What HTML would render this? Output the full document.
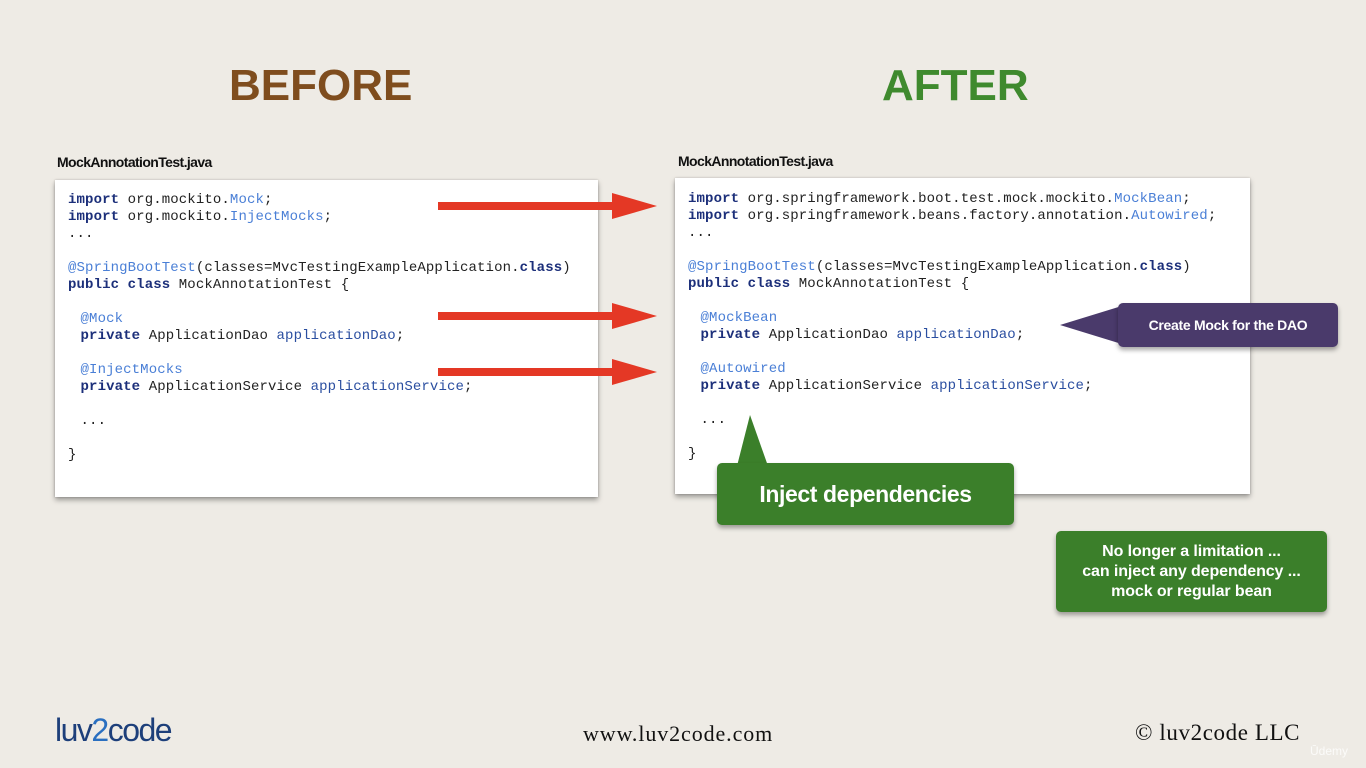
<!DOCTYPE html>
<html><head><meta charset="utf-8"><style>
*{margin:0;padding:0;box-sizing:border-box}
body{width:1366px;height:768px;overflow:hidden;background:#eeebe5;position:relative;font-family:"Liberation Sans",sans-serif}
.abs{position:absolute}
.title{font-weight:bold;font-size:44px;top:60px;line-height:52px}
.fname{font-weight:bold;font-size:14px;letter-spacing:-0.6px;color:#111}
.box{background:#fff;box-shadow:0 3px 5px rgba(0,0,0,.35),0 0 2px rgba(0,0,0,.2)}
pre{position:absolute;font-family:"Liberation Mono",monospace;font-size:14px;line-height:17px;color:#222;letter-spacing:0.12px}
.k{color:#1c2f7a;font-weight:bold}
.a{color:#4a7fd6}
.v{color:#2a4ea0}
.i{padding-left:4px}
.g{background:#3b7f2a;color:#fff;font-weight:bold;text-align:center;border-radius:5px;box-shadow:0 3px 5px rgba(0,0,0,.35)}
.serif{font-family:"Liberation Serif",serif;color:#111}
</style></head><body>
<div class="abs title" style="left:229px;color:#7f4d1e">BEFORE</div>
<div class="abs title" style="left:882px;color:#3f8a2e">AFTER</div>
<div class="abs fname" style="left:57px;top:154px">MockAnnotationTest.java</div>
<div class="abs fname" style="left:678px;top:153px">MockAnnotationTest.java</div>

<div class="abs box" style="left:55px;top:180px;width:543px;height:317px"></div>
<pre style="left:68px;top:192px"><span class="k">import</span> org.mockito.<span class="a">Mock</span>;
<span class="k">import</span> org.mockito.<span class="a">InjectMocks</span>;
...

<span class="a">@SpringBootTest</span>(classes=MvcTestingExampleApplication.<span class="k">class</span>)
<span class="k">public class</span> MockAnnotationTest {

 <span class="i"></span><span class="a">@Mock</span>
 <span class="i"></span><span class="k">private</span> ApplicationDao <span class="v">applicationDao</span>;

 <span class="i"></span><span class="a">@InjectMocks</span>
 <span class="i"></span><span class="k">private</span> ApplicationService <span class="v">applicationService</span>;

 <span class="i"></span>...

}</pre>

<div class="abs box" style="left:675px;top:178px;width:575px;height:316px"></div>
<pre style="left:688px;top:191px"><span class="k">import</span> org.springframework.boot.test.mock.mockito.<span class="a">MockBean</span>;
<span class="k">import</span> org.springframework.beans.factory.annotation.<span class="a">Autowired</span>;
...

<span class="a">@SpringBootTest</span>(classes=MvcTestingExampleApplication.<span class="k">class</span>)
<span class="k">public class</span> MockAnnotationTest {

 <span class="i"></span><span class="a">@MockBean</span>
 <span class="i"></span><span class="k">private</span> ApplicationDao <span class="v">applicationDao</span>;

 <span class="i"></span><span class="a">@Autowired</span>
 <span class="i"></span><span class="k">private</span> ApplicationService <span class="v">applicationService</span>;

 <span class="i"></span>...

}</pre>

<svg class="abs" style="left:0;top:0" width="1366" height="768">
<g fill="#e43825">
<rect x="438" y="202" width="176" height="8"/><polygon points="612,193 657,206 612,219"/>
<rect x="438" y="312" width="176" height="8"/><polygon points="612,303 657,316 612,329"/>
<rect x="438" y="368" width="176" height="8"/><polygon points="612,359 657,372 612,385"/>
</g>
<polygon points="1060,325 1125,305 1125,345" fill="#4a3a6b"/>
<polygon points="750,415 737,466 768,466" fill="#3b7f2a"/>
</svg>
<div class="abs" style="left:1118px;top:303px;width:220px;height:44px;background:#4a3a6b;border-radius:5px;box-shadow:0 3px 5px rgba(0,0,0,.35);color:#fff;font-weight:bold;font-size:14px;line-height:44px;text-align:center;letter-spacing:-0.3px">Create Mock for the DAO</div>
<div class="abs g" style="left:717px;top:463px;width:297px;height:62px;font-size:23px;line-height:62px;letter-spacing:-0.4px">Inject dependencies</div>
<div class="abs g" style="left:1056px;top:531px;width:271px;height:81px;font-size:16px;line-height:20px;padding-top:11px;letter-spacing:-0.1px">No longer a limitation ...<br>can inject any dependency ...<br>mock or regular bean</div>

<div class="abs" style="left:55px;top:712px;font-family:'Liberation Sans',sans-serif;font-size:32px;color:#1d3f7a;letter-spacing:-1.5px">luv<span style="color:#2a6fc0">2</span>code</div>
<div class="abs serif" style="left:583px;top:721px;font-size:22px;letter-spacing:0.9px">www.luv2code.com</div>
<div class="abs serif" style="left:1135px;top:720px;font-size:23px;letter-spacing:0.6px">© luv2code LLC</div>
<div class="abs" style="left:1310px;top:744px;font-size:12px;color:#fff;opacity:.8">Ūdemy</div>
</body></html>
